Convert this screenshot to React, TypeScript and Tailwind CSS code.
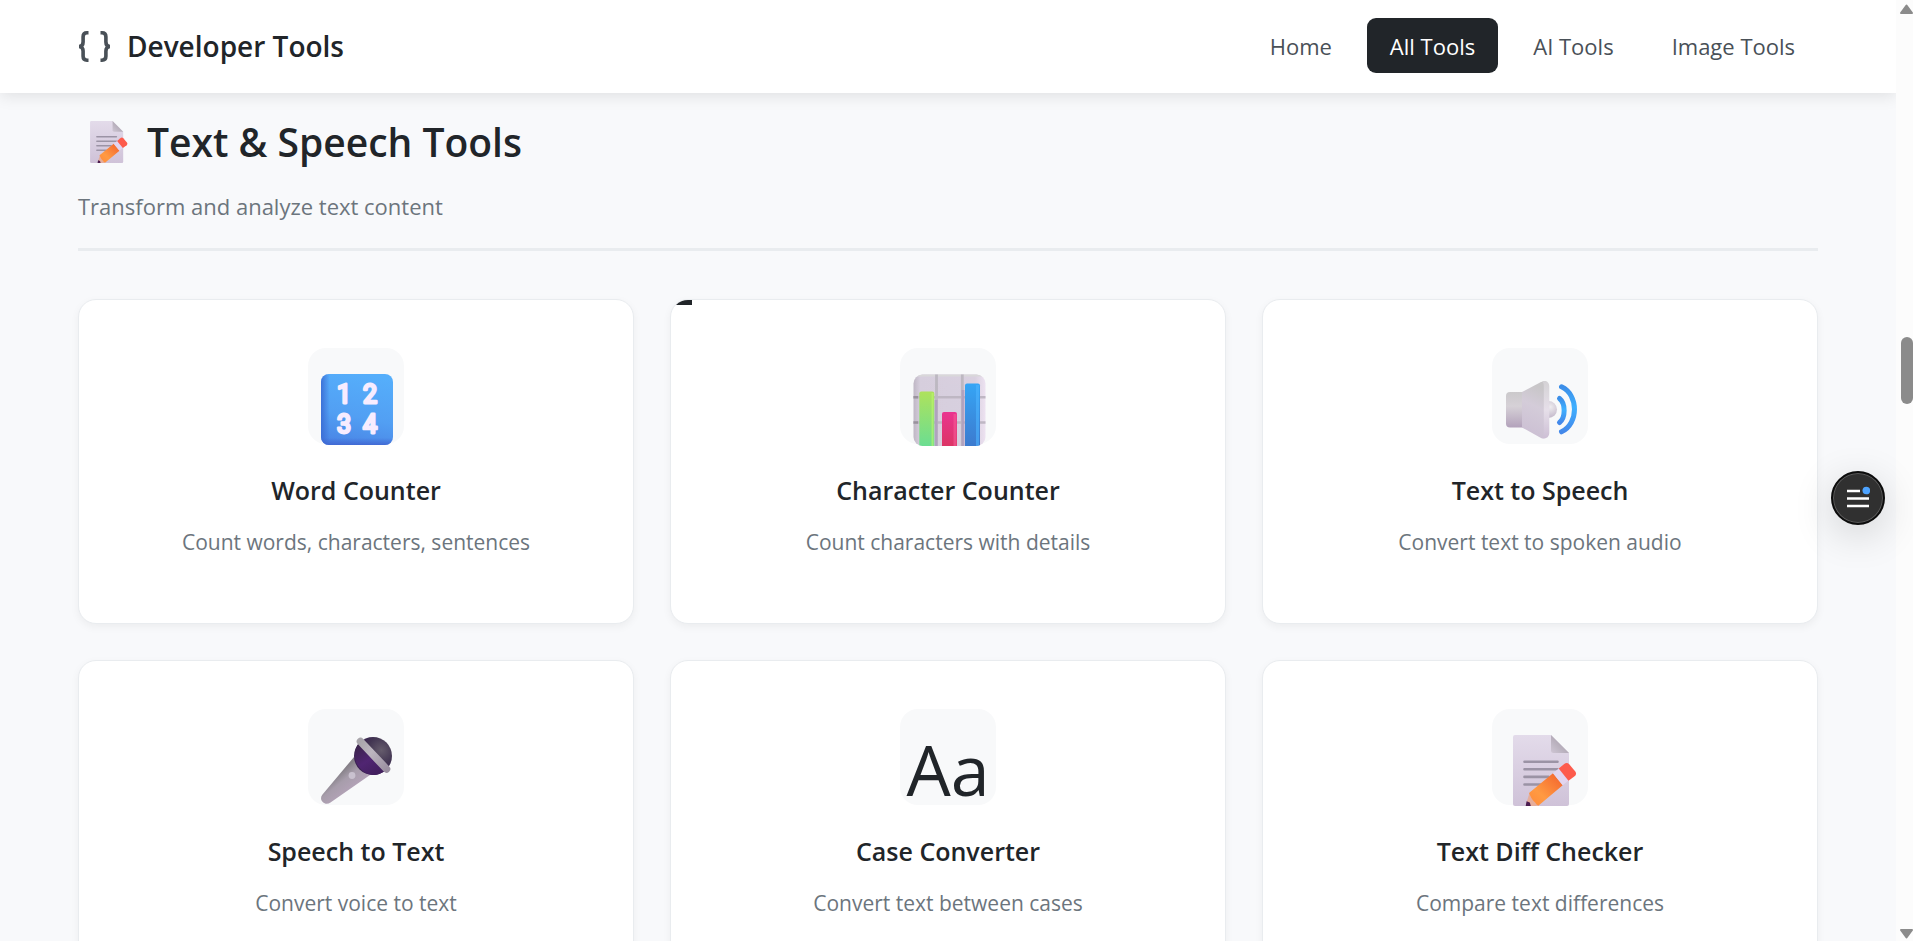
import React from 'react';
import clsx from 'clsx';

interface Tool {
    name: string;
    description: string;
    icon: React.ReactNode;
    // shows the accent bar starting to slide in along the top edge
    accent?: boolean;
}

const NAV_ITEMS = ['Home', 'All Tools', 'AI Tools', 'Image Tools'];
const ACTIVE_ITEM = 'All Tools';

const MemoIcon = ({ id, viewBox, className }: { id: string; viewBox: string; className: string }) => (
    <svg viewBox={viewBox} className={className} aria-hidden="true">
        <defs>
            <linearGradient id={`${id}-page`} x1="0" y1="0" x2="0" y2="1">
                <stop offset="0" stopColor="#e3dbea" />
                <stop offset="1" stopColor="#cfc2d8" />
            </linearGradient>
            <linearGradient id={`${id}-fold`} x1="0" y1="1" x2="1" y2="0">
                <stop offset="0" stopColor="#cfc6d4" />
                <stop offset="0.5" stopColor="#b5adb9" />
            </linearGradient>
            <linearGradient id={`${id}-body`} x1="0" y1="1" x2="1" y2="0">
                <stop offset="0" stopColor="#ff8a3a" />
                <stop offset="0.35" stopColor="#ff9a42" />
                <stop offset="1" stopColor="#f2602c" />
            </linearGradient>
        </defs>
        <path d="M23 26h36l18 18v51a2 2 0 0 1-2 2H23a2 2 0 0 1-2-2V28a2 2 0 0 1 2-2z" fill={`url(#${id}-page)`} />
        <path d="M59 26l18 18H61.500a2.500 2.500 0 0 1-2.500-2.500z" fill={`url(#${id}-fold)`} />
        <path d="M32.500 52.700h33M32.500 60.300h33M32.500 67.900h24M32.500 75.500h16" stroke="#9b93a5" strokeWidth="2.600" strokeLinecap="round" />
        <path d="M37.500 84L46 96l-2 1H34l1-5z" fill="#e5ad9b" />
        <path d="M34.600 92.300l3.200 1.200 1 3.500H33.700z" fill="#4b1b4f" />
        <path d="M37 84L61 64.300 70.700 76.300 46.300 96.700c-2-.5-2.600-3-4.300-4.200-1.700-1.200-3.500-5.500-5-8.500z" fill={`url(#${id}-body)`} />
        <path d="M61 64.300l5.700-4.700 9.800 11.900-5.800 4.800z" fill="#e2d5ef" />
        <path d="M66.700 59.600l5.500-4.600c1.700-1.400 3.700-1.300 5 .2l6.100 7.200c1.200 1.500 1 3.200-.4 4.500l-6.400 4.800z" fill="#fd5b4c" />
    </svg>
);

const NumbersIcon = () => (
    <svg viewBox="0 0 96 96" className="size-24 overflow-visible" aria-hidden="true">
        <defs>
            <linearGradient id="num-bg" x1="0.6" y1="0" x2="0.4" y2="1">
                <stop offset="0" stopColor="#55aefb" />
                <stop offset="0.6" stopColor="#529ff3" />
                <stop offset="1" stopColor="#4a86e6" />
            </linearGradient>
            <linearGradient id="num-side" x1="0" y1="0" x2="1" y2="0">
                <stop offset="0" stopColor="#3a6cd4" stopOpacity="0.9" />
                <stop offset="0.12" stopColor="#3a6cd4" stopOpacity="0" />
            </linearGradient>
            <linearGradient id="num-foot" x1="0" y1="0" x2="0" y2="1">
                <stop offset="0.9" stopColor="#3f62cf" stopOpacity="0" />
                <stop offset="1" stopColor="#3f62cf" stopOpacity="0.8" />
            </linearGradient>
        </defs>
        <rect x="13" y="26" width="72" height="71" rx="8" fill="url(#num-bg)" />
        <rect x="13" y="26" width="72" height="71" rx="8" fill="url(#num-side)" />
        <rect x="13" y="26" width="72" height="71" rx="8" fill="url(#num-foot)" />
        <g
            className="font-[Roboto,sans-serif] text-[25px]"
            fill="#f7ecff"
            stroke="#f7ecff"
            strokeWidth="2.800"
            strokeLinejoin="round"
            textAnchor="middle"
        >
            <text x="36" y="55">1</text>
            <text x="62" y="55">2</text>
            <text x="36" y="85">3</text>
            <text x="62" y="85">4</text>
        </g>
    </svg>
);

const ChartIcon = () => (
    <svg viewBox="0 0 96 96" className="size-24 overflow-visible" aria-hidden="true">
        <defs>
            <clipPath id="chart-clip">
                <rect x="13.500" y="26.500" width="72" height="71.500" rx="9" />
            </clipPath>
            <linearGradient id="chart-bg" x1="0" y1="0" x2="1" y2="0">
                <stop offset="0" stopColor="#bdb5c2" />
                <stop offset="0.1" stopColor="#d6cedd" />
                <stop offset="0.85" stopColor="#d9d0df" />
                <stop offset="1" stopColor="#eee3f2" />
            </linearGradient>
            <linearGradient id="chart-green" x1="0" y1="0" x2="0" y2="1">
                <stop offset="0" stopColor="#aee25c" />
                <stop offset="1" stopColor="#67dd95" />
            </linearGradient>
            <linearGradient id="chart-pink" x1="0" y1="0" x2="0" y2="1">
                <stop offset="0" stopColor="#ea3490" />
                <stop offset="1" stopColor="#da3560" />
            </linearGradient>
            <linearGradient id="chart-blue" x1="0" y1="0" x2="0" y2="1">
                <stop offset="0" stopColor="#35a5f5" />
                <stop offset="1" stopColor="#3d78cc" />
            </linearGradient>
        </defs>
        <g clipPath="url(#chart-clip)">
            <path d="M13 26h73v73H13z" fill="url(#chart-bg)" />
            <path d="M13 27h73" stroke="#d9d8d9" strokeWidth="3" />
            <path d="M13 49.300h73M13 74.500h73" stroke="#bfb7c4" strokeWidth="2.400" />
            <path d="M13 49.300h5M13 74.500h5" stroke="#99929d" strokeWidth="2.400" />
            <path d="M36.500 26v73M62.300 26v73" stroke="#bdb8c1" strokeWidth="2.800" />
            <path d="M36 52v47M63 42v57" stroke="#a793bd" strokeWidth="3" opacity="0.6" />
            <rect x="19.300" y="43.500" width="15" height="58" rx="2" fill="url(#chart-green)" />
            <path d="M31.500 45h2v54h-2z" fill="#c0f76c" opacity="0.6" />
            <rect x="42" y="64" width="15" height="38" rx="2" fill="url(#chart-pink)" />
            <path d="M53.500 66h3v34h-3z" fill="#f55c96" opacity="0.6" />
            <rect x="65" y="35.500" width="15" height="66" rx="2" fill="url(#chart-blue)" />
            <path d="M76 37h3v62h-3z" fill="#4cb4ff" opacity="0.6" />
        </g>
    </svg>
);

const SpeakerIcon = () => (
    <svg viewBox="0 0 96 96" className="size-24 overflow-visible" aria-hidden="true">
        <defs>
            <linearGradient id="spk-box" x1="0" y1="0" x2="0" y2="1">
                <stop offset="0" stopColor="#cbc9cb" />
                <stop offset="0.4" stopColor="#d6d1d7" />
                <stop offset="1" stopColor="#b3a2bb" />
            </linearGradient>
            <linearGradient id="spk-cone" x1="0.2" y1="0" x2="0" y2="1">
                <stop offset="0" stopColor="#c8c6c8" />
                <stop offset="0.35" stopColor="#d4ccd9" />
                <stop offset="1" stopColor="#cabdd2" />
            </linearGradient>
            <linearGradient id="spk-rim" x1="0" y1="0" x2="0" y2="1">
                <stop offset="0" stopColor="#d4d2d5" />
                <stop offset="0.5" stopColor="#e6dfe9" />
                <stop offset="1" stopColor="#cdbfd5" />
            </linearGradient>
            <radialGradient id="spk-ball" cx="0.6" cy="0.35" r="0.6">
                <stop offset="0" stopColor="#eeecef" />
                <stop offset="1" stopColor="#c6bccd" />
            </radialGradient>
            <linearGradient id="spk-wave" x1="0" y1="0" x2="0" y2="1">
                <stop offset="0" stopColor="#3c8ee8" />
                <stop offset="0.45" stopColor="#3fb0ff" />
                <stop offset="1" stopColor="#4388ea" />
            </linearGradient>
        </defs>
        <circle cx="56.500" cy="61.500" r="8.500" fill="url(#spk-ball)" />
        <path d="M18 44h13v35.500H18a4 4 0 0 1-4-4V48a4 4 0 0 1 4-4z" fill="url(#spk-box)" />
        <path d="M30 44l19-10c3.500-1.500 6 0 6 4v48c0 4-2.500 5.500-6 4L30 79.500z" fill="url(#spk-cone)" />
        <path d="M50 33.500c4-1.500 7.300.5 7.300 5v46c0 4.500-3.300 7-7.300 5.200 1.500-1 1.800-2.700 1.800-5.200v-46c0-2.500-.3-4-1.800-5z" fill="url(#spk-rim)" />
        <path d="M67.500 50.500c6.200 5 6.200 19 0 24" fill="none" stroke="url(#spk-wave)" strokeWidth="5" strokeLinecap="round" />
        <path d="M69.500 38.800c17.300 8 17.300 37 0 45" fill="none" stroke="url(#spk-wave)" strokeWidth="5" strokeLinecap="round" />
    </svg>
);

const MicIcon = () => (
    <svg viewBox="0 0 96 96" className="size-24 overflow-visible" aria-hidden="true">
        <defs>
            <linearGradient id="mic-handle" x1="0.35" y1="0.35" x2="0.65" y2="0.7">
                <stop offset="0" stopColor="#858087" />
                <stop offset="0.4" stopColor="#a79dab" />
                <stop offset="1" stopColor="#b4a3b8" />
            </linearGradient>
            <radialGradient id="mic-head" cx="0.72" cy="0.35" r="0.6">
                <stop offset="0" stopColor="#655c6c" />
                <stop offset="0.6" stopColor="#423552" />
                <stop offset="1" stopColor="#38204f" />
            </radialGradient>
            <linearGradient id="mic-neck" x1="0" y1="0" x2="0.6" y2="1">
                <stop offset="0" stopColor="#352341" />
                <stop offset="0.6" stopColor="#502572" />
                <stop offset="1" stopColor="#43205f" />
            </linearGradient>
            <linearGradient id="mic-band" x1="0" y1="0" x2="1" y2="1">
                <stop offset="0" stopColor="#a9a6ab" />
                <stop offset="0.4" stopColor="#bdb6c0" />
                <stop offset="1" stopColor="#9b90a1" />
            </linearGradient>
        </defs>
        <path d="M46 48L14.500 85.500c-2 2.500-2 5.300.2 7.500 2.200 2.300 5.300 2.300 7.800.4L62 66z" fill="url(#mic-handle)" />
        <circle cx="65" cy="47" r="19" fill="url(#mic-head)" />
        <path d="M52 33c-6 6-7 16-2.500 23 4 6 9 9.500 15 10 6 .2 10-2 13-5z" fill="url(#mic-neck)" />
        <path d="M52.500 32.500l26 27.500" stroke="url(#mic-band)" strokeWidth="7.600" strokeLinecap="round" />
        <circle cx="44" cy="66.500" r="3.400" fill="#c9c1cf" />
    </svg>
);

const TOOLS: Tool[] = [
    { name: 'Word Counter', description: 'Count words, characters, sentences', icon: <NumbersIcon /> },
    { name: 'Character Counter', description: 'Count characters with details', icon: <ChartIcon />, accent: true },
    { name: 'Text to Speech', description: 'Convert text to spoken audio', icon: <SpeakerIcon /> },
    { name: 'Speech to Text', description: 'Convert voice to text', icon: <MicIcon /> },
    {
        name: 'Case Converter',
        description: 'Convert text between cases',
        icon: <span className="mt-6 text-[70px] leading-[60px] text-[#212529]">Aa</span>,
    },
    {
        name: 'Text Diff Checker',
        description: 'Compare text differences',
        icon: <MemoIcon id="diff" viewBox="0 0 96 96" className="size-24 overflow-visible" />,
    },
];

const ToolCard = ({ tool }: { tool: Tool }) => (
    <a
        href="#"
        className="relative flex flex-col items-center overflow-hidden rounded-[18px] border border-[#e9ecef] bg-white px-12 pt-12 pb-[63px] text-center shadow-[0_3px_8px_rgba(0,0,0,0.05)]"
    >
        {tool.accent && <span className="absolute top-0 left-0 h-[5px] w-[21px] bg-[#212529]" />}
        <div className="flex size-24 items-center justify-center rounded-[18px] bg-[#f8f9fa]">{tool.icon}</div>
        <h3 className="mt-7 text-[25px] leading-9 font-semibold text-[#212529]">{tool.name}</h3>
        <p className="mt-4 text-[21px] leading-9 text-[#6c757d]">{tool.description}</p>
    </a>
);

const Header = () => (
    <header className="relative z-10 flex items-start justify-between bg-white px-[78px] pt-[18px] pb-5 shadow-[0_3px_15px_rgba(0,0,0,0.1)]">
        <a href="#" className="flex h-[55px] items-center gap-4 text-[28px] font-semibold text-[#212529]">
            <svg viewBox="0 0 33 34" className="h-[34px] w-[33px]" fill="none" stroke="#495057" strokeWidth="3.600" aria-hidden="true">
                <path d="M10.500 3.800H9c-2.600 0-3.900 1.300-3.900 3.900v5.300c0 2.600-1.200 4.200-3.900 4.500 2.700.3 3.900 1.900 3.900 4.500v5.300c0 2.600 1.300 3.900 3.900 3.900h1.500" />
                <path d="M22.500 3.800H24c2.600 0 3.900 1.300 3.900 3.900v5.300c0 2.600 1.200 4.200 3.900 4.500-2.700.3-3.900 1.900-3.900 4.500v5.300c0 2.600-1.300 3.900-3.900 3.900h-1.500" />
            </svg>
            Developer Tools
        </a>
        <nav className="flex gap-3">
            {NAV_ITEMS.map(item => (
                <a
                    key={item}
                    href="#"
                    className={clsx(
                        'flex h-[55px] items-center rounded-[9px] px-[23px] pt-0.5 text-[22px]',
                        item === ACTIVE_ITEM ? 'bg-[#212529] text-white' : 'text-[#495057]'
                    )}
                >
                    {item}
                </a>
            ))}
        </nav>
    </header>
);

const Scrollbar = () => (
    <div className="flex w-[17px] shrink-0 flex-col items-end justify-between bg-[#fcfcfc]" aria-hidden="true">
        <svg viewBox="0 0 13 16" className="h-4 w-[13px]">
            <path d="M6.500 5.500L12 13H1z" fill="#8b8b8b" stroke="#8b8b8b" strokeWidth="2" strokeLinejoin="round" />
        </svg>
        <div className="flex-1 pt-[321px]">
            <div className="h-[67px] w-3 rounded-full bg-[#8b8b8b]" />
        </div>
        <svg viewBox="0 0 13 16" className="h-4 w-[13px]">
            <path d="M6.500 12.500L12 5H1z" fill="#8b8b8b" stroke="#8b8b8b" strokeWidth="2" strokeLinejoin="round" />
        </svg>
    </div>
);

export default function App() {
    return (
        <div className="flex h-screen overflow-hidden bg-[#f8f9fb] font-['Open_Sans','Noto_Sans',sans-serif]">
            <div className="min-w-0 flex-1 overflow-hidden">
                <Header />
                <main className="px-[78px] pt-[19px]">
                    <div className="border-b-[3px] border-[#e9ecef] pb-6">
                        <h2 className="flex h-[60px] items-center gap-[19px] pl-3 text-[39px] font-semibold text-[#212529]">
                            <MemoIcon id="heading" viewBox="21 26 64 71" className="h-[42px] w-[38px]" />
                            Text &amp; Speech Tools
                        </h2>
                        <p className="mt-4 text-[22px] leading-9 text-[#6c757d]">Transform and analyze text content</p>
                    </div>
                    <div className="mt-12 grid grid-cols-3 gap-9">
                        {TOOLS.map(tool => (
                            <ToolCard key={tool.name} tool={tool} />
                        ))}
                    </div>
                </main>
            </div>
            <Scrollbar />
            <button
                type="button"
                aria-label="Open menu"
                className="fixed top-[471px] right-7 z-20 flex size-[54px] items-center justify-center rounded-full border-2 border-[#0c0c0c] bg-[#303030] shadow-[inset_0_0_0_1px_#5a5a5a,0_10px_40px_rgba(0,0,0,0.16)]"
            >
                <svg viewBox="0 0 24 24" className="size-6" aria-hidden="true">
                    <path d="M1 5h13M1 12.500h22M1 20h22" stroke="#fff" strokeWidth="2.400" />
                    <circle cx="20.300" cy="4.500" r="3.800" fill="#4da3ff" />
                </svg>
            </button>
        </div>
    );
}
